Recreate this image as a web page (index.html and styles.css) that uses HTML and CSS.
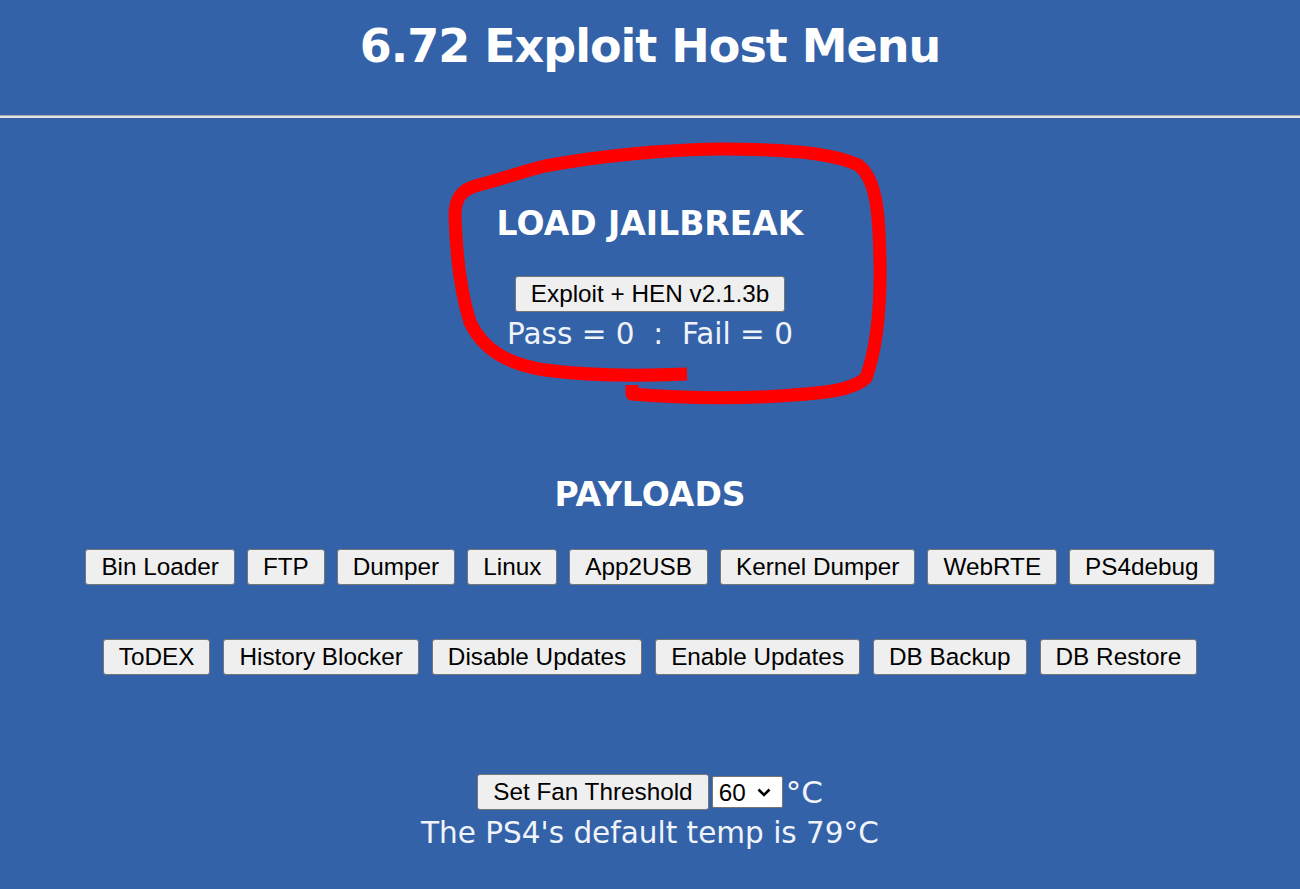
FILE: index.html
```html
<!DOCTYPE html>
<html lang="en">
<head>
    <meta charset="UTF-8">
    <meta name="viewport" content="width=device-width, initial-scale=1.0">
    <title>6.72 Exploit Host Menu</title>
    <link rel="stylesheet" href="styles.css">
</head>
<body>
    <div class="page">
        <h1>6.72 Exploit Host Menu</h1>
        <hr>

        <div class="jailbreak">
            <h2>LOAD JAILBREAK</h2>
            <div class="row">
                <button>Exploit + HEN v2.1.3b</button>
            </div>
            <p class="stats">Pass = 0 &nbsp;:&nbsp; Fail = 0</p>
        </div>

        <h2 class="payloads-title">PAYLOADS</h2>
        <div class="row buttons">
            <button>Bin Loader</button>
            <button>FTP</button>
            <button>Dumper</button>
            <button>Linux</button>
            <button>App2USB</button>
            <button>Kernel Dumper</button>
            <button>WebRTE</button>
            <button>PS4debug</button>
        </div>
        <div class="row buttons second">
            <button>ToDEX</button>
            <button>History Blocker</button>
            <button>Disable Updates</button>
            <button>Enable Updates</button>
            <button>DB Backup</button>
            <button>DB Restore</button>
        </div>

        <div class="row fan">
            <button>Set Fan Threshold</button>
            <span class="select-wrap">
                <select>
                    <option>60</option>
                    <option>65</option>
                    <option>70</option>
                    <option>75</option>
                </select>
                <svg class="chevron" viewBox="0 0 14 9" width="14" height="9">
                    <path d="M1.5 1.5 L7 7 L12.5 1.5" fill="none" stroke="#000" stroke-width="2.6"/>
                </svg>
            </span>
            <span class="unit">&deg;C</span>
        </div>
        <p class="note">The PS4's default temp is 79&deg;C</p>

        <!-- red marker drawn over the screenshot -->
        <svg class="scribble" viewBox="0 0 1300 889" width="1300" height="889">
            <path d="M687 374 C640 376 590 376 545 370 C505 364 482 348 470 322 C460 290 456 250 455 215 C455 198 462 190 475 186 C500 180 520 172 545 166 C600 156 660 150 720 149 C780 149 830 152 858 165 C876 178 879 210 880 260 C881 310 876 350 866 378 C850 392 820 393 780 396 C730 399 680 398 632 394 L632 385"
                  fill="none" stroke="#ff0000" stroke-width="13" stroke-linecap="butt" stroke-linejoin="round"/>
        </svg>
    </div>
</body>
</html>
```

FILE: styles.css
```css
body {
    margin: 0;
    background-color: #3362a8;
    color: #fff;
    font-family: "DejaVu Sans", Tahoma, sans-serif;
    text-align: center;
}

.page {
    position: relative;
    height: 889px;
    overflow: hidden;
}

h1 {
    font-size: 46px;
    letter-spacing: -1px;
    line-height: 56px;
    margin: 18px 0 0;
}

hr {
    height: 0;
    margin: 41px 0 0;
    border: 0;
    border-top: 1px solid #a5a9b0;
    border-bottom: 2px solid #e2e2e2;
}

h2 {
    font-size: 33px;
    line-height: 38px;
    margin: 87px 0 0;
}

.row {
    display: flex;
    justify-content: center;
    align-items: center;
    margin-top: 33px;
}

button {
    font-family: "Liberation Sans", Arial, sans-serif;
    font-size: 24.3px;
    line-height: 28px;
    height: 36px;
    padding: 3px 15px;
    color: #000;
    background-color: #efefef;
    border: 1px solid #767676;
    border-radius: 3px;
}

.stats {
    font-size: 29.5px;
    line-height: 34px;
    margin: 5px 0 0;
    color: #f0f4fa;
}

.payloads-title {
    margin-top: 125px;
}

.buttons {
    gap: 12px;
    margin-top: 35px;
}

.buttons.second {
    gap: 13px;
    margin-top: 54px;
}

.fan {
    margin-top: 99px;
    gap: 3px;
}

.select-wrap {
    position: relative;
    display: flex;
}

.select-wrap select {
    appearance: none;
    font-family: "Liberation Sans", Arial, sans-serif;
    font-size: 24.3px;
    height: 32px;
    width: 71px;
    padding: 0 0 0 6px;
    color: #000;
    background-color: #fff;
    border: 1px solid #767676;
    border-radius: 2px;
}

.chevron {
    position: absolute;
    right: 12px;
    top: 12px;
    pointer-events: none;
}

.unit {
    font-size: 31px;
    line-height: 34px;
    color: #f0f4fa;
}

.note {
    font-size: 29.5px;
    line-height: 34px;
    margin: 6px 0 0;
    color: #f0f4fa;
}

.scribble {
    position: absolute;
    top: 0;
    left: 0;
}
```
